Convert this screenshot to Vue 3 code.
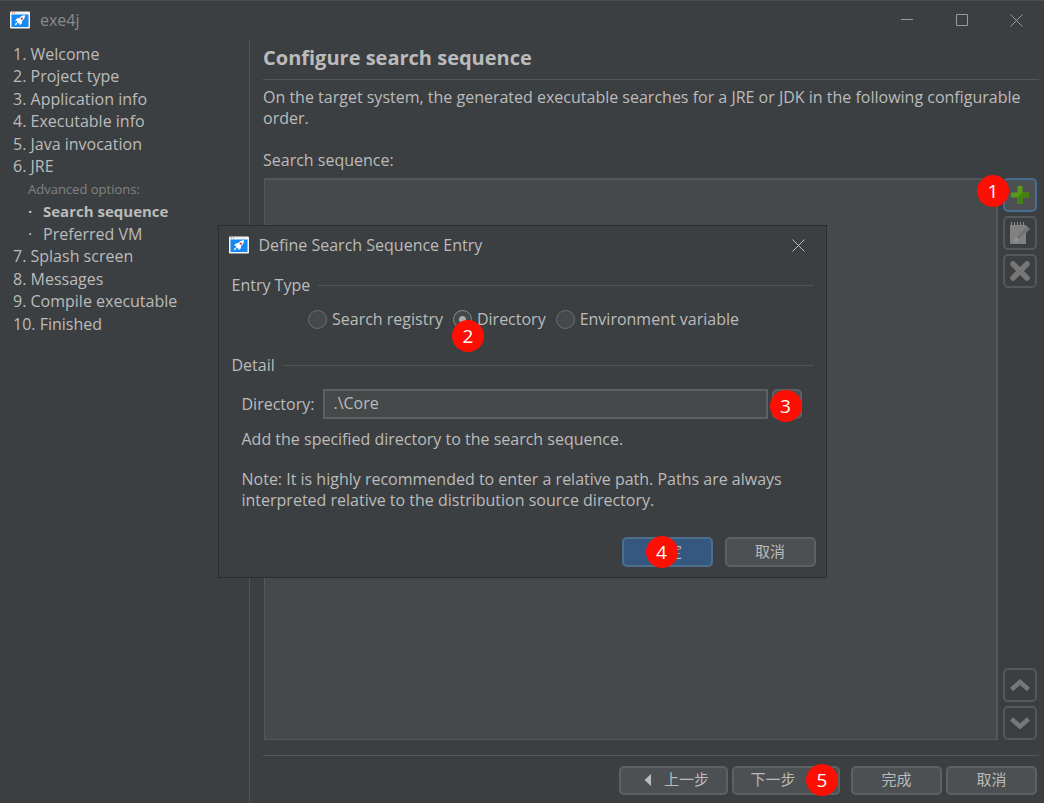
<script setup>
import { ref, h } from 'vue'

const steps = [
  { text: '1. Welcome' },
  { text: '2. Project type' },
  { text: '3. Application info' },
  { text: '4. Executable info' },
  { text: '5. Java invocation' },
  { text: '6. JRE' },
  { text: 'Advanced options:', kind: 'caption' },
  { text: 'Search sequence', kind: 'sub', current: true },
  { text: 'Preferred VM', kind: 'sub' },
  { text: '7. Splash screen' },
  { text: '8. Messages' },
  { text: '9. Compile executable' },
  { text: '10. Finished' },
]

const entryTypes = ['Search registry', 'Directory', 'Environment variable']
const entryType = ref('Directory')
const directory = ref('.\\Core')

const AppIcon = () =>
  h('svg', { width: 20, height: 18, viewBox: '0 0 20 18', 'aria-hidden': 'true' }, [
    h('rect', { width: 20, height: 17, y: 0.5, rx: 1, fill: '#f1f3f5' }),
    h('rect', { x: 1.5, y: 3.5, width: 17, height: 12.5, fill: '#1588f5' }),
    h('path', { d: 'M2 1.8h1M4 1.8h1', stroke: '#e0614a', 'stroke-width': 1 }),
    h('path', {
      d: 'M15 4.2c-2.600-.1-4.300.9-5.700 2.900l-2.500.4-1.800 2.200 2.200.1-.5 1.200 1.500 1.500 1.200-.5.200 2.200 2.200-1.800.300-2.500c2-1.500 3-3.200 2.900-5.700zM6 11.600l-1.500 3 3-1.500z',
      fill: '#fff',
    }),
    h('circle', { cx: 11.8, cy: 7.6, r: 1.2, fill: '#d9452f' }),
  ])
</script>

<template>
  <div class="window">
    <header class="titlebar">
      <AppIcon />
      <span class="window-name">exe4j</span>
      <div class="window-controls">
        <button type="button" aria-label="Minimize">
          <svg width="13" height="13" viewBox="0 0 13 13"><path d="M1 5.500h12" /></svg>
        </button>
        <button type="button" aria-label="Maximize">
          <svg width="13" height="13" viewBox="0 0 13 13"><path d="M1.500.5h11v11h-11z" /></svg>
        </button>
        <button type="button" aria-label="Close">
          <svg width="13" height="13" viewBox="0 0 13 13"><path d="M.5.5l12 12M12.500.5l-12 12" /></svg>
        </button>
      </div>
    </header>

    <div class="body">
      <nav class="sidebar" aria-label="Steps">
        <ul>
          <li
            v-for="step in steps"
            :key="step.text"
            :class="[step.kind, { current: step.current }]"
          >{{ step.text }}</li>
        </ul>
      </nav>

      <main class="main">
        <h1>Configure search sequence</h1>
        <p class="intro">
          On the target system, the generated executable searches for a JRE or JDK in the following configurable order.
        </p>
        <h2>Search sequence:</h2>
        <div class="sequence">
          <div class="list" role="listbox" aria-label="Search sequence"></div>
          <div class="tools">
            <button type="button" class="tool focused" aria-label="Add">
              <svg width="20" height="20" viewBox="0 0 20 20">
                <path d="M7.500 1h5v6.500H19v5h-6.500V19h-5v-6.500H1v-5h6.500z" fill="#569a1c" />
                <path d="M12.500 7.500H19v5h-6.500V19h-5v-6.500z" fill="#43820f" />
              </svg>
              <span class="badge badge-1">1</span>
            </button>
            <button type="button" class="tool" aria-label="Edit">
              <svg width="22" height="24" viewBox="0 0 22 24">
                <path d="M1 4h16v19H1z" fill="#808080" />
                <path d="M2.500 1v4M5.500 1v4M8.500 1v4M11.500 1v4M14.500 1v4" stroke="#8a8a8a" />
                <path d="M5 21l2-5L17 5l3.500 3L10 19z" fill="#737373" stroke="#8e8e8e" stroke-width=".7" />
                <path d="M5 21l2-5 3 3z" fill="#959595" />
              </svg>
            </button>
            <button type="button" class="tool" aria-label="Remove">
              <svg width="20" height="20" viewBox="0 0 20 20">
                <path d="M3 3l14 14M17 3L3 17" stroke="#777" stroke-width="5.500" stroke-linecap="round" />
              </svg>
            </button>
            <button type="button" class="tool move-up" aria-label="Move up">
              <svg width="20" height="20" viewBox="0 0 20 20">
                <path d="M1.500 14.500L10 7l8.500 7.500" stroke="#777" stroke-width="4.500" fill="none" />
              </svg>
            </button>
            <button type="button" class="tool" aria-label="Move down">
              <svg width="20" height="20" viewBox="0 0 20 20">
                <path d="M1.500 6L10 13.500 18.500 6" stroke="#777" stroke-width="4.500" fill="none" />
              </svg>
            </button>
          </div>
        </div>
        <footer class="actions">
          <button type="button" class="btn back">
            <svg width="8" height="14" viewBox="0 0 8 14"><path d="M7 1v12L.5 7z" fill="#bbb" /></svg>
            <span>上一步</span>
          </button>
          <button type="button" class="btn next">
            <span>下一步</span>
            <svg width="8" height="14" viewBox="0 0 8 14"><path d="M1 1v12l6.500-6z" fill="#bbb" /></svg>
            <span class="badge badge-5">5</span>
          </button>
          <button type="button" class="btn finish">完成</button>
          <button type="button" class="btn">取消</button>
        </footer>
      </main>
    </div>

    <div class="overlay">
      <section class="dialog" role="dialog" aria-labelledby="dialog-title">
        <header class="dialog-bar">
          <AppIcon />
          <span id="dialog-title">Define Search Sequence Entry</span>
          <button type="button" aria-label="Close dialog">
            <svg width="13" height="13" viewBox="0 0 13 13"><path d="M.5.5l12 12M12.500.5l-12 12" /></svg>
          </button>
        </header>

        <h3 class="group">Entry Type</h3>
        <div class="radios" role="radiogroup" aria-label="Entry Type">
          <label v-for="type in entryTypes" :key="type" class="radio">
            <input v-model="entryType" type="radio" name="entry-type" :value="type" />
            {{ type }}
            <span v-if="type === 'Directory'" class="badge badge-2">2</span>
          </label>
        </div>

        <h3 class="group detail">Detail</h3>
        <div class="field">
          <label for="directory">Directory:</label>
          <input id="directory" v-model="directory" type="text" />
          <button type="button" class="browse" aria-label="Browse">
            <span class="badge badge-3">3</span>
          </button>
        </div>
        <p class="hint">Add the specified directory to the search sequence.</p>
        <p class="note">
          Note: It is highly recommended to enter a relative path. Paths are always interpreted relative to the distribution source directory.
        </p>
        <div class="dialog-actions">
          <button type="button" class="btn primary">
            确定
            <span class="badge badge-4">4</span>
          </button>
          <button type="button" class="btn">取消</button>
        </div>
      </section>
    </div>
  </div>
</template>

<style>
body {
  margin: 0;
  background: #3c3f41;
}
</style>

<style scoped>
.window {
  position: relative;
  display: flex;
  flex-direction: column;
  box-sizing: border-box;
  min-height: 100vh;
  border-top: 1px solid #4b4e50;
  background: #3c3f41;
  color: #bbb;
  font-family: "Open Sans", "Noto Sans CJK SC", sans-serif;
  font-size: 16px;
  line-height: 21px;
}

button,
input {
  margin: 0;
  padding: 0;
  box-sizing: border-box;
  font: inherit;
  color: inherit;
}

h1,
h2,
h3,
p,
ul {
  margin: 0;
  padding: 0;
  font-weight: normal;
  font-size: 16px;
}

svg {
  display: block;
  flex: none;
}

.titlebar {
  display: flex;
  align-items: center;
  height: 38px;
  padding-left: 10px;
  gap: 10px;
  color: #888a8b;
}

.window-controls {
  display: flex;
  align-self: stretch;
  margin-left: auto;
}

.window-controls button,
.dialog-bar button {
  display: grid;
  place-items: center;
  width: 55px;
  border: 0;
  background: none;
}

.window-controls path,
.dialog-bar button path {
  fill: none;
  stroke: #999b9c;
}

.dialog-bar button path {
  stroke: #bbb;
}

.body {
  display: flex;
  flex: 1;
}

.sidebar {
  box-sizing: border-box;
  flex: none;
  width: 250px;
  padding: 4px 0 0 13px;
  border-right: 1px solid #515456;
}

.sidebar ul {
  list-style: none;
}

.sidebar li {
  line-height: 22px;
}

.sidebar li:nth-child(even) {
  line-height: 23px;
}

.sidebar .caption {
  padding-left: 15px;
  font-size: 13px;
  color: #808283;
}

.sidebar .sub {
  display: flex;
  padding-left: 15px;
}

.sidebar .sub::before {
  content: "·";
  width: 15px;
}

.sidebar .current {
  font-size: 15px;
  font-weight: bold;
}

.main {
  display: flex;
  flex: 1;
  flex-direction: column;
  min-width: 0;
  padding: 0 5px 8px 13px;
}

.main h1 {
  padding-bottom: 2px;
  border-bottom: 1px solid #55585a;
  font-size: 20px;
  line-height: 38px;
  font-weight: bold;
}

.intro {
  margin-top: 7px;
}

.main h2 {
  margin-top: 21px;
}

.sequence {
  display: flex;
  flex: 1;
  gap: 5px;
  margin-top: 7px;
  padding: 0 2px 0 1px;
}

.list {
  flex: 1;
  border: 2px solid #55585a;
  border-width: 2px 2px 1px 1px;
  background: #45494a;
}

.tools {
  display: flex;
  flex-direction: column;
  gap: 4px;
}

.tool {
  position: relative;
  display: grid;
  place-items: center;
  width: 34px;
  height: 34px;
  border: 2px solid #55585a;
  border-radius: 5px;
  background: #3c3f41;
}

.focused {
  border-color: #466d94;
  background: #4c5052;
}

.move-up {
  margin-top: auto;
}

.actions {
  display: flex;
  justify-content: flex-end;
  gap: 4px;
  margin-top: 15px;
  padding: 10px 2px 0 0;
  border-top: 1px solid #55585a;
}

.btn {
  position: relative;
  display: flex;
  align-items: center;
  justify-content: center;
  width: 91px;
  height: 30px;
  border: 2px solid #5e6162;
  border-radius: 5px;
  background: #4c5052;
  font-size: 15px;
}

.actions .btn {
  height: 29px;
  padding-bottom: 2px;
}

.back {
  width: 109px;
  gap: 12px;
}

.actions .back {
  padding-left: 6px;
}

.next {
  width: 108px;
  gap: 12px;
}

.actions .next {
  padding-right: 6px;
}

.finish {
  margin-left: 7px;
}

.dialog-actions .btn {
  padding-bottom: 2px;
}

.primary {
  border-color: #4c708c;
  background: #365880;
}

.overlay {
  position: absolute;
  inset: -1px 0 0;
  display: grid;
  place-items: center;
}

.dialog {
  box-sizing: border-box;
  width: 609px;
  padding: 0 10px 10px 13px;
  border: 1px solid #2b2d2e;
  background: #3c3f41;
}

.dialog-bar {
  display: flex;
  align-items: center;
  gap: 10px;
  height: 38px;
  margin-left: -3px;
}

.dialog-bar button {
  width: 35px;
  height: 35px;
  margin-left: auto;
}

.group {
  display: flex;
  align-items: center;
  gap: 8px;
  margin: 11px 2px 0 0;
}

.group::after {
  content: "";
  flex: 1;
  height: 1px;
  background: #515456;
}

.radios {
  display: flex;
  justify-content: center;
  gap: 10px;
  margin-top: 13px;
}

.radio {
  position: relative;
  display: flex;
  align-items: center;
  gap: 5px;
}

.radio input {
  appearance: none;
  width: 19px;
  height: 19px;
  border: 1px solid #6b6e70;
  border-radius: 50%;
  background: #43494a;
}

.radio input:checked {
  border-color: #898b8c;
  background: radial-gradient(circle, #aaa 3px, #43494a 4px);
}

.detail {
  margin-top: 25px;
}

.field {
  display: flex;
  align-items: center;
  gap: 4px;
  margin: 13px 14px 0 10px;
}

.field label {
  margin-right: 5px;
}

.field input {
  flex: 1;
  min-width: 0;
  height: 30px;
  padding: 0 8px 2px;
  border: 2px solid #5e6162;
  background: #45494a;
}

.browse {
  position: relative;
  width: 30px;
  height: 30px;
  border: 2px solid #5e6162;
  border-radius: 5px;
  background: #4c5052;
}

.hint {
  margin: 10px 10px 0;
}

.note {
  margin: 19px 10px 0;
}

.dialog-actions {
  display: flex;
  justify-content: flex-end;
  gap: 12px;
  margin-top: 26px;
}

.badge {
  position: absolute;
  display: grid;
  place-items: center;
  width: 32px;
  height: 32px;
  border-radius: 50%;
  background: #fe0f04;
  color: #fff;
  font-size: 19px;
}

.badge-1 {
  top: -5px;
  left: -28px;
}

.badge-2 {
  top: 11px;
  left: -1px;
}

.badge-3 {
  top: -1px;
  left: -4px;
}

.badge-4 {
  top: -3px;
  left: 22px;
}

.badge-5 {
  top: -4px;
  right: 0;
}
</style>
